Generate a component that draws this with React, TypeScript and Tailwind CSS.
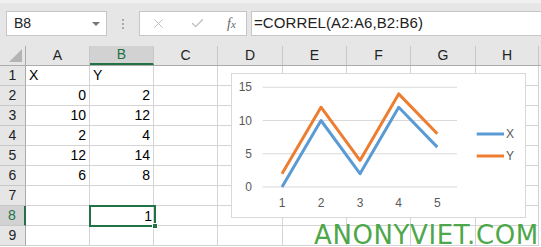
import { X, Check } from 'lucide-react';

const cols = [
  { name: 'A', w: 64 },
  { name: 'B', w: 64 },
  { name: 'C', w: 64 },
  { name: 'D', w: 65 },
  { name: 'E', w: 64 },
  { name: 'F', w: 64 },
  { name: 'G', w: 65 },
  { name: 'H', w: 63 },
];

const data: Record<number, [string, string]> = {
  1: ['X', 'Y'],
  2: ['0', '2'],
  3: ['10', '12'],
  4: ['2', '4'],
  5: ['12', '14'],
  6: ['6', '8'],
};

const xs = [51, 90, 129, 167.7, 206.3];
const yOf = (v: number) => 114 - v * 6.65;
const pts = (vals: number[]) => vals.map((v, i) => `${xs[i]},${yOf(v)}`).join(' ');

function Chart() {
  return (
    <div className="absolute left-[231px] top-[73px] w-[295px] h-[145px] bg-white border border-[#d9d9d9]">
      <svg width="295" height="145" className="absolute -left-px -top-px">
        {[0, 5, 10, 15].map((v) => (
          <g key={v}>
            <line x1="31.7" x2="226" y1={yOf(v)} y2={yOf(v)} stroke="#d9d9d9" strokeWidth="1" />
            <text x="21" y={yOf(v) + 4} textAnchor="end" fontSize="12" fill="#595959" fontFamily="Liberation Sans, sans-serif">{v}</text>
          </g>
        ))}
        {xs.map((x, i) => (
          <text key={i} x={x} y="134" textAnchor="middle" fontSize="12" fill="#595959" fontFamily="Liberation Sans, sans-serif">{i + 1}</text>
        ))}
        <polyline points={pts([0, 10, 2, 12, 6])} fill="none" stroke="#5b9bd5" strokeWidth="3" strokeLinejoin="round" />
        <polyline points={pts([2, 12, 4, 14, 8])} fill="none" stroke="#ed7d31" strokeWidth="3" strokeLinejoin="round" />
        <line x1="245.7" x2="273" y1="61" y2="61" stroke="#5b9bd5" strokeWidth="3" />
        <line x1="245.7" x2="273" y1="83" y2="83" stroke="#ed7d31" strokeWidth="3" />
        <text x="275" y="65" fontSize="12" fill="#595959" fontFamily="Liberation Sans, sans-serif">X</text>
        <text x="275" y="87" fontSize="12" fill="#595959" fontFamily="Liberation Sans, sans-serif">Y</text>
      </svg>
    </div>
  );
}

export default function App() {
  return (
    <div className="relative w-[541px] h-[247px] overflow-hidden bg-white" style={{ fontFamily: '"Liberation Sans", Arial, sans-serif' }}>
      {/* formula bar */}
      <div className="h-[46px] bg-[#e6e6e6] border-t-[3px] border-[#f0f0f0] flex items-start pt-[8px] pl-[6px]">
        <div className="w-[101px] h-[25px] bg-white border border-[#c6c6c6] flex items-center justify-between pl-[7px] pr-[6px]">
          <span className="text-[14px] text-[#222]">B8</span>
          <span className="w-0 h-0 border-l-[4px] border-r-[4px] border-t-[4px] border-l-transparent border-r-transparent border-t-[#777]" />
        </div>
        <div className="w-[32px] h-[25px] flex flex-col items-center justify-center gap-[2px]">
          <span className="w-[2px] h-[2px] bg-[#aaa]" />
          <span className="w-[2px] h-[2px] bg-[#aaa]" />
          <span className="w-[2px] h-[2px] bg-[#aaa]" />
        </div>
        <div className="w-[108px] h-[25px] bg-white border border-[#c6c6c6] flex items-center pl-[11px]">
          <X className="w-[15px] h-[15px] text-[#bcbcbc]" strokeWidth={1.5} />
          <Check className="w-[15px] h-[15px] text-[#bcbcbc] ml-[24px]" strokeWidth={2} />
          <span className="ml-[22px] text-[14px] italic text-[#666]" style={{ fontFamily: '"Liberation Serif", serif' }}>
            f<span className="text-[11px]">x</span>
          </span>
        </div>
        <div className="ml-[4px] flex-1 h-[25px] bg-white border border-[#c6c6c6] border-r-0 flex items-center pl-[2px]">
          <span className="text-[15px] text-[#222] tracking-[0.1px]">=CORREL(A2:A6,B2:B6)</span>
        </div>
      </div>

      {/* column headers */}
      <div className="flex h-[20px] bg-[#e6e6e6] border-b border-[#ababab]">
        <div className="w-[26px] border-r border-[#ababab] relative">
          <span className="absolute right-[3px] bottom-[3px] w-0 h-0" style={{ borderRight: '0', borderBottom: '13px solid #b4b4b4', borderLeft: '13px solid transparent', borderTop: '0' }} />
        </div>
        {cols.map((c) => (
          <div
            key={c.name}
            className={`shrink-0 border-r border-[#c8c8c8] flex items-center justify-center text-[14px] ${c.name === 'B' ? 'bg-[#d2d2d2] text-[#217346] border-b-2 border-b-[#217346]' : 'text-[#222]'}`}
            style={{ width: c.w }}
          >
            {c.name}
          </div>
        ))}
      </div>

      {/* rows */}
      {[1, 2, 3, 4, 5, 6, 7, 8, 9].map((r) => (
        <div key={r} className="flex h-[20px]">
          <div className={`w-[26px] shrink-0 flex items-center justify-center text-[14px] border-b border-[#c8c8c8] ${r === 8 ? 'bg-[#d2d2d2] text-[#217346] border-r-2 border-r-[#217346]' : 'bg-[#e6e6e6] text-[#222] border-r border-r-[#ababab]'}`}>
            {r}
          </div>
          {cols.map((c, ci) => {
            const v = ci < 2 ? data[r]?.[ci] : undefined;
            const left = r === 1;
            return (
              <div
                key={c.name}
                className={`shrink-0 border-r border-b border-[#d4d4d4] flex items-center text-[14px] text-black ${left ? 'justify-start pl-[3px]' : 'justify-end pr-[3px]'}`}
                style={{ width: c.w }}
              >
                {v}
              </div>
            );
          })}
        </div>
      ))}

      {/* active cell B8 */}
      <div className="absolute left-[89px] top-[205px] w-[67px] h-[22px] border-2 border-[#217346] flex items-center justify-end pr-[2px] text-[14px] text-black">
        1
        <span className="absolute -right-[4px] -bottom-[4px] w-[6px] h-[6px] bg-[#217346] border border-white" />
      </div>

      <Chart />

      {/* watermark */}
      <div className="absolute left-[314px] top-[224px] text-[26px] leading-[22px] tracking-[0.6px] text-[#4ea74a] whitespace-nowrap" style={{ fontFamily: '"DejaVu Sans", sans-serif' }}>
        ANONYVIET.COM
      </div>
    </div>
  );
}
